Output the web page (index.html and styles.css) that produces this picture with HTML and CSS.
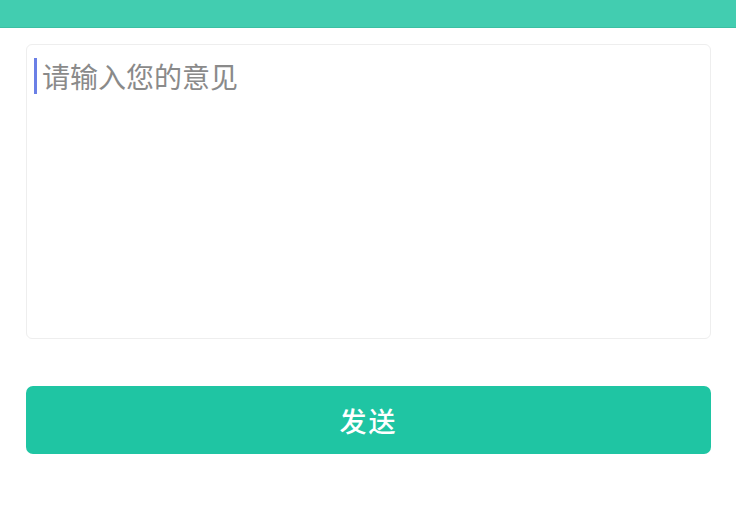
FILE: index.html
```html
<!DOCTYPE html>
<html lang="zh-CN">
<head>
<meta charset="UTF-8">
<meta name="viewport" content="width=device-width, initial-scale=1.0">
<title>意见反馈</title>
<link rel="stylesheet" href="styles.css">
</head>
<body>
<div class="topbar"></div>
<div class="content">
    <div class="feedback">
        <span class="caret"></span>
        <span class="placeholder">请输入您的意见</span>
    </div>
    <button class="send" type="button">发送</button>
</div>
</body>
</html>
```

FILE: styles.css
```css
body {
margin: 0;
background-color: #fff;
font-family: "Noto Sans CJK SC", "Noto Sans", sans-serif;
}
.topbar {
height: 27px;
background-color: #42cdb0;
border-bottom: 1px solid #3cbfa3;
}
.content {
padding: 16px 25px 0 26px;
}
.feedback {
box-sizing: border-box;
height: 295px;
border: 1px solid #eeeeee;
border-radius: 6px;
padding: 13px 7px;
display: flex;
align-items: flex-start;
}
.caret {
width: 3px;
height: 36px;
background-color: #6b80e6;
margin-right: 5px;
}
.placeholder {
font-size: 28px;
line-height: 36px;
color: #8a8a8a;
}
.send {
display: block;
width: 100%;
height: 68px;
margin-top: 47px;
border: none;
border-radius: 7px;
background-color: #1fc5a3;
color: #fff;
font-family: inherit;
font-size: 27px;
font-weight: 500;
letter-spacing: 2px;
padding: 0;
}
```
